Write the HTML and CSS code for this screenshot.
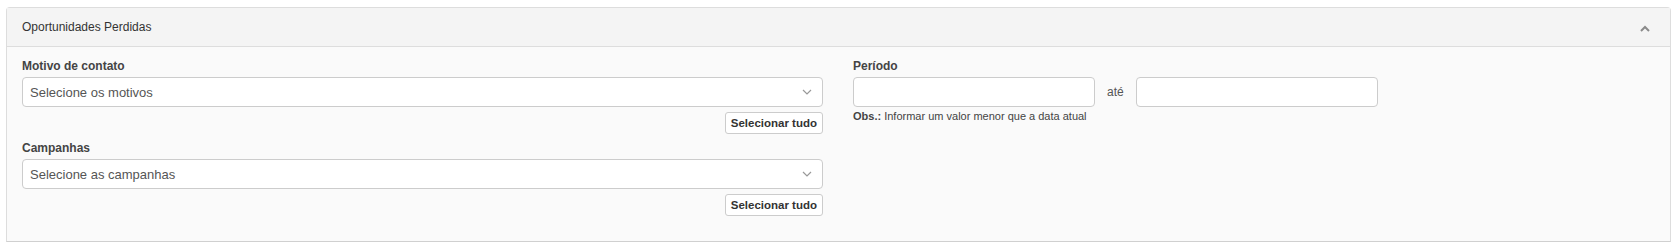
FILE: index.html
```html
<!DOCTYPE html>
<html lang="pt-BR">
<head>
    <meta charset="UTF-8">
    <title>Oportunidades Perdidas</title>
    <link rel="stylesheet" href="styles.css">
</head>
<body>

<div class="panel">
    <div class="panel-heading">
        <span>Oportunidades Perdidas</span>
        <svg class="collapse-icon" width="10" height="7" viewBox="0 0 10 7">
            <path d="M1 6 L5 2 L9 6" fill="none" stroke="#8a8a8a" stroke-width="2"/>
        </svg>
    </div>
    <div class="panel-body">
        <div class="col-left">
            <div class="field">
                <label>Motivo de contato</label>
                <div class="select">
                    <span>Selecione os motivos</span>
                    <svg width="10" height="6" viewBox="0 0 10 6">
                        <path d="M1 1 L5 5 L9 1" fill="none" stroke="#999" stroke-width="1.2"/>
                    </svg>
                </div>
                <div class="actions"><button>Selecionar tudo</button></div>
            </div>
            <div class="field">
                <label>Campanhas</label>
                <div class="select">
                    <span>Selecione as campanhas</span>
                    <svg width="10" height="6" viewBox="0 0 10 6">
                        <path d="M1 1 L5 5 L9 1" fill="none" stroke="#999" stroke-width="1.2"/>
                    </svg>
                </div>
                <div class="actions"><button>Selecionar tudo</button></div>
            </div>
        </div>
        <div class="col-right">
            <label>Período</label>
            <div class="period">
                <input type="text">
                <span class="ate">até</span>
                <input type="text">
            </div>
            <p class="obs"><b>Obs.:</b> Informar um valor menor que a data atual</p>
        </div>
    </div>
</div>

</body>
</html>
```

FILE: styles.css
```css
body {
    font-family: "Liberation Sans", Arial, sans-serif;
    margin: 0;
    padding: 0;
    background-color: #ffffff;
    color: #333;
}

.panel {
    margin: 7px 2px 0 6px;
    border: 1px solid #dddddd;
    border-bottom-color: #d0d0d0;
    border-radius: 4px 4px 0 0;
    background-color: #fafafa;
}

.panel-heading {
    display: flex;
    align-items: center;
    justify-content: space-between;
    height: 38px;
    padding: 0 20px 0 15px;
    background-color: #f4f4f4;
    border-bottom: 1px solid #dddddd;
    font-size: 12px;
    color: #333;
}

.collapse-icon {
    margin-top: 3px;
}

.panel-body {
    display: grid;
    grid-template-columns: 801px 1fr;
    column-gap: 30px;
    padding: 12px 15px 25px;
}

label {
    display: block;
    font-size: 12px;
    font-weight: bold;
    color: #444;
    line-height: 15px;
    margin-bottom: 3px;
}

.field {
    margin-bottom: 7px;
}

.field:last-child {
    margin-bottom: 0;
}

.select {
    display: flex;
    align-items: center;
    justify-content: space-between;
    height: 28px;
    padding: 0 10px 0 7px;
    background-color: #ffffff;
    border: 1px solid #cccccc;
    border-radius: 4px;
    font-size: 13px;
    color: #555;
}

.actions {
    display: flex;
    justify-content: flex-end;
    margin-top: 5px;
}

button {
    height: 22px;
    padding: 0 5px;
    background-color: #ffffff;
    border: 1px solid #cccccc;
    border-radius: 3px;
    font-family: inherit;
    font-size: 11.5px;
    font-weight: bold;
    color: #333;
}

.period {
    display: flex;
    align-items: center;
}

input {
    width: 242px;
    height: 30px;
    box-sizing: border-box;
    border: 1px solid #cccccc;
    border-radius: 4px;
    background-color: #ffffff;
}

.ate {
    font-size: 12px;
    color: #555;
    margin: 0 12px;
}

.obs {
    margin: 3px 0 0;
    font-size: 11px;
    color: #444;
}

.obs b {
    color: #444;
}
```
